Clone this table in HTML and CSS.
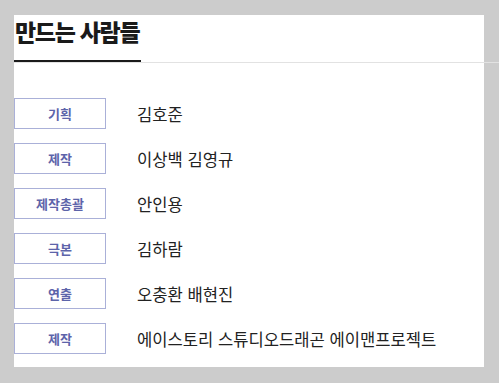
FILE: index.html
```html
<!DOCTYPE html>
<html lang="ko">
<head>
    <meta charset="UTF-8">
    <title>만드는 사람들</title>
    <link rel="stylesheet" href="styles.css">
</head>
<body>
    <!-- Credits panel -->
    <div class="credits">
        <div class="credits-head">
            <h2 class="credits-title">만드는 사람들</h2>
        </div>

        <ul class="credits-list">
            <li class="credit-row">
                <span class="credit-role">기획</span>
                <span class="credit-name">김호준</span>
            </li>
            <li class="credit-row">
                <span class="credit-role">제작</span>
                <span class="credit-name">이상백 김영규</span>
            </li>
            <li class="credit-row">
                <span class="credit-role">제작총괄</span>
                <span class="credit-name">안인용</span>
            </li>
            <li class="credit-row">
                <span class="credit-role">극본</span>
                <span class="credit-name">김하람</span>
            </li>
            <li class="credit-row">
                <span class="credit-role">연출</span>
                <span class="credit-name">오충환 배현진</span>
            </li>
            <li class="credit-row">
                <span class="credit-role">제작</span>
                <span class="credit-name">에이스토리 스튜디오드래곤 에이맨프로젝트</span>
            </li>
        </ul>
    </div>
</body>
</html>
```

FILE: styles.css
```css
html {
    background-color: #cccccc;
}

body {
    margin: 0;
    padding: 15px 15px 16px 14px;
    font-family: "Noto Sans CJK KR", "Noto Sans", sans-serif;
    color: #222;
}

.credits {
    width: 470px;
    height: 352px;
    background-color: #fff;
}

/* Title with the dark underline sitting on a thin rule */
.credits-head {
    margin-right: -15px;
    border-bottom: 1px solid #e2e2e2;
}

.credits-title {
    display: inline-block;
    margin: 0;
    padding: 0 2px 0 1px;
    height: 45px;
    font-size: 23px;
    font-weight: 900;
    letter-spacing: -1.3px;
    line-height: 32px;
    color: #1a1a1a;
    border-bottom: 2px solid #1a1a1a;
}

.credits-list {
    list-style: none;
    margin: 0;
    padding: 35px 0 0;
    display: flex;
    flex-direction: column;
    gap: 14px;
}

.credit-row {
    display: flex;
    align-items: center;
    gap: 31px;
}

.credit-role {
    box-sizing: border-box;
    width: 92px;
    height: 31px;
    display: flex;
    align-items: center;
    justify-content: center;
    border: 1px solid #aab0d8;
    font-size: 13px;
    font-weight: 700;
    color: #5d64aa;
}

.credit-name {
    font-size: 16.6px;
    color: #222;
}
```
